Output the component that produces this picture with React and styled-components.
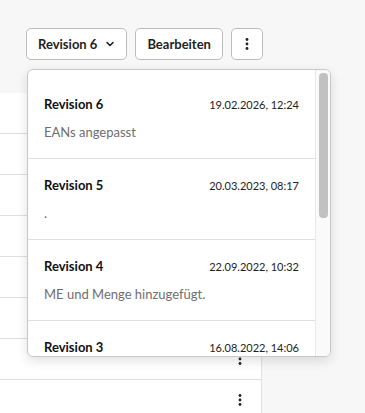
import React from "react";
import styled, { createGlobalStyle } from "styled-components";

const GlobalStyle = createGlobalStyle`
  html, body {
    margin: 0;
    padding: 0;
    background: #f7f7f7;
    font-family: "Lato", "Liberation Sans", sans-serif;
    color: #111;
  }
  * { box-sizing: border-box; }
`;

const revisions = [
  { name: "Revision 6", date: "19.02.2026, 12:24", note: "EANs angepasst" },
  { name: "Revision 5", date: "20.03.2023, 08:17", note: "." },
  { name: "Revision 4", date: "22.09.2022, 10:32", note: "ME und Menge hinzugefügt." },
  { name: "Revision 3", date: "16.08.2022, 14:06", note: "" },
];

const Kebab = ({ size = 14 }) => (
  <svg width={size} height={size} viewBox="0 0 14 14" fill="#222">
    <circle cx="7" cy="2.5" r="1.4" />
    <circle cx="7" cy="7" r="1.4" />
    <circle cx="7" cy="11.5" r="1.4" />
  </svg>
);

const App = () => {
  return (
    <Page>
      <GlobalStyle />
      <Toolbar>
        <Dropdown>
          <Button>
            Revision 6
            <svg width="10" height="10" viewBox="0 0 10 10">
              <path d="M2 3.5 L5 6.5 L8 3.5" fill="none" stroke="#222" strokeWidth="1.6" strokeLinecap="round" strokeLinejoin="round" />
            </svg>
          </Button>
          <Menu>
            <List>
              {revisions.map((r) => (
                <Item key={r.name}>
                  <ItemHead>
                    <Title>{r.name}</Title>
                    <Date>{r.date}</Date>
                  </ItemHead>
                  {r.note && <Note>{r.note}</Note>}
                </Item>
              ))}
            </List>
            <Track>
              <Thumb />
            </Track>
          </Menu>
        </Dropdown>
        <Button>Bearbeiten</Button>
        <IconButton>
          <Kebab />
        </IconButton>
      </Toolbar>
      <Table>
        {Array.from({ length: 8 }).map((_, i) => (
          <Row key={i}>
            <Kebab />
          </Row>
        ))}
      </Table>
    </Page>
  );
};

export default App;

const Page = styled.div`
  width: 365px;
  height: 413px;
  overflow: hidden;
  padding-top: 28px;
`;

const Toolbar = styled.div`
  display: flex;
  gap: 8px;
  margin-left: 26px;
  height: 32px;
`;

const Dropdown = styled.div`
  position: relative;
`;

const Button = styled.button`
  height: 32px;
  padding: 0 11px;
  display: flex;
  align-items: center;
  gap: 8px;
  background: #fff;
  border: 1px solid #bdbdbd;
  border-radius: 5px;
  font-family: inherit;
  font-size: 13px;
  font-weight: 700;
  color: #222;
`;

const IconButton = styled(Button)`
  width: 32px;
  padding: 0;
  justify-content: center;
`;

const Menu = styled.div`
  position: absolute;
  top: 41px;
  left: 1px;
  width: 304px;
  height: 288px;
  display: flex;
  overflow: hidden;
  background: #fff;
  border: 1px solid #c8c8c8;
  border-radius: 6px;
  box-shadow: 0 4px 12px rgba(0, 0, 0, 0.12);
  z-index: 2;
`;

const List = styled.div`
  flex: 1;
  overflow: hidden;
  padding-top: 8px;
`;

const Track = styled.div`
  width: 15px;
  background: #fafafa;
  border-left: 1px solid #e8e8e8;
  padding: 3px 2px 0 3px;
`;

const Thumb = styled.div`
  height: 145px;
  border-radius: 4px;
  background: #c1c1c1;
`;

const Item = styled.div`
  height: 81px;
  padding: 17px 16px 0 16px;
  border-bottom: 1px solid #dedede;
`;

const ItemHead = styled.div`
  display: flex;
  justify-content: space-between;
  align-items: center;
  height: 18px;
`;

const Title = styled.span`
  font-size: 13px;
  font-weight: 700;
  color: #111;
`;

const Date = styled.span`
  font-size: 11px;
  color: #222;
`;

const Note = styled.div`
  margin-top: 10px;
  font-size: 13px;
  line-height: 18px;
  color: #6e6e6e;
`;

const Table = styled.div`
  margin-top: 33px;
  width: 262px;
  background: #fff;
  border-right: 1px solid #e2e2e2;
`;

const Row = styled.div`
  height: 41px;
  border-bottom: 1px solid #dedede;
  display: flex;
  align-items: center;
  justify-content: flex-end;
  padding-right: 14px;
`;
